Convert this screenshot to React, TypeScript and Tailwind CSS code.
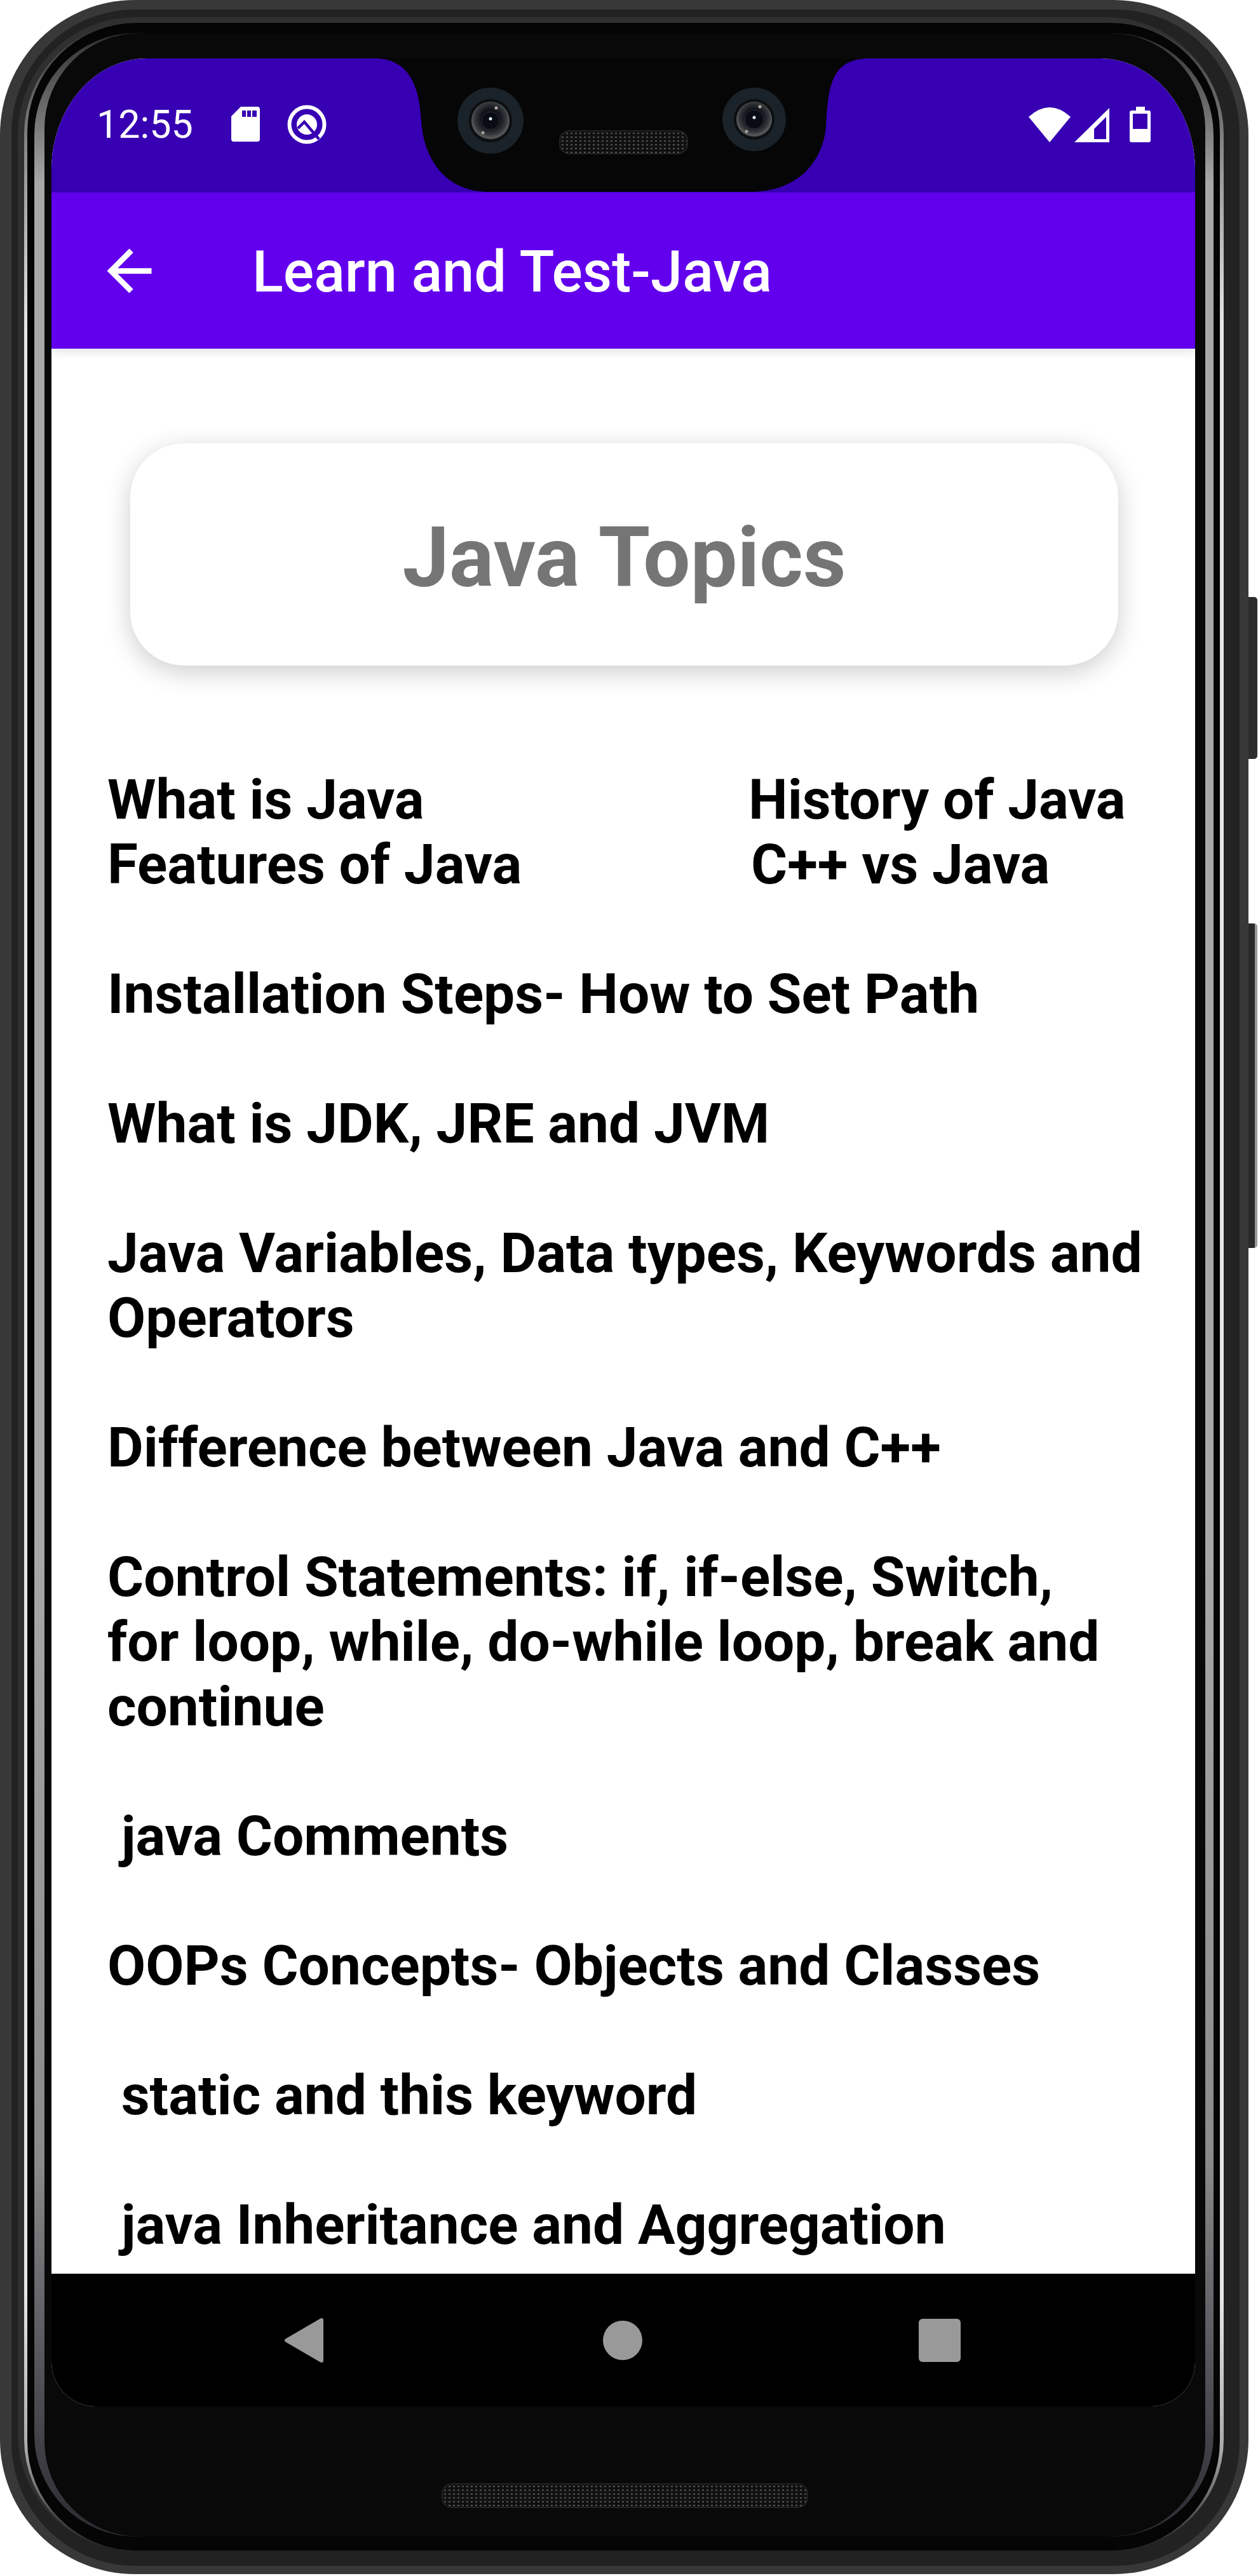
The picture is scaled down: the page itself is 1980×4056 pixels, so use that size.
import React from "react";

function Camera({ id, size, lens, iris }: { id: string; size: number; lens: number; iris: number }) {
  const c = size / 2;
  return (
    <svg width={size} height={size} viewBox={`0 0 ${size} ${size}`}>
      <defs>
        <radialGradient id={id} cx="50%" cy="45%" r="55%">
          <stop offset="0%" stopColor="#0a0d14" />
          <stop offset="45%" stopColor="#10131a" />
          <stop offset="75%" stopColor="#33363a" />
          <stop offset="92%" stopColor="#5a5c5e" />
          <stop offset="100%" stopColor="#181a1c" />
        </radialGradient>
      </defs>
      <circle cx={c} cy={c} r={c} fill="#1a2329" />
      <circle cx={c} cy={c} r={lens + 4} fill="#0c0e10" />
      <circle cx={c} cy={c} r={lens} fill={`url(#${id})`} />
      <circle cx={c} cy={c} r={iris} fill="#0a0c14" stroke="#2c3038" strokeWidth="1" />
      <circle cx={c} cy={c - 3} r="2.5" fill="#dfeeff" />
      <circle cx={c + 9} cy={c - 20} r="2.5" fill="#b8a8a0" />
      <circle cx={c - 12} cy={c + 19} r="2.5" fill="#a8a098" />
    </svg>
  );
}

function Speaker({ className }: { className: string }) {
  return (
    <div
      className={`rounded-[16px] border-2 border-[#222222] bg-[#111111] bg-[radial-gradient(circle,#5c5c5c_1px,transparent_1.6px)] bg-[length:7px_6px] ${className}`}
    />
  );
}

const topics = [
  "Installation Steps- How to Set Path",
  "What is JDK, JRE and JVM",
  "Java Variables, Data types, Keywords and\nOperators",
  "Difference between Java and C++",
  "Control Statements: if, if-else, Switch,\nfor loop, while, do-while loop, break and\ncontinue",
  " java Comments",
  "OOPs Concepts- Objects and Classes",
  " static and this keyword",
  " java Inheritance and Aggregation",
];

export default function App() {
  return (
    <div className="relative h-[4056px] w-[1980px] overflow-hidden bg-white font-[family-name:Roboto,sans-serif]">
      {/* side buttons */}
      <div className="absolute left-[1960px] top-[940px] h-[255px] w-[19px] rounded-r-[5px] bg-[#2c2c2c]" />
      <div className="absolute left-[1960px] top-[1454px] h-[511px] w-[19px] rounded-r-[5px] border-r-[4px] border-[#9a9a9a] bg-[#2a2a2a]" />

      {/* outer frame bands */}
      <div className="relative h-[4053px] w-[1965px] rounded-[212px] bg-[#383838] pb-[13px] pl-[18px] pr-[14px] pt-[15px]">
        <div className="h-full rounded-[195px] bg-[#222222] pb-[24px] pl-[10px] pr-[25px] pt-[12px]">
          <div className="h-full rounded-[185px] bg-[#303030] pl-[10px] pt-[9px]">
            {/* white line ring */}
            <div className="h-full rounded-[175px] bg-[linear-gradient(180deg,#333333_0%,#999999_6%,#e6e6e6_12%,#e6e6e6_90%,#aaaaaa_96%,#222222_100%)] pl-[5px] pr-[6px]">
              <div className="h-full rounded-[172px] bg-[#050505] pb-[22px] pl-[11px] pr-[10px] pt-[16px]">
                {/* gray ring */}
                <div className="h-full rounded-[160px] bg-[linear-gradient(180deg,#303030_0%,#a8a8a8_6%,#a8a8a8_60%,#8a8a8a_85%,#55555c_93%,#2a2a30_100%)] pl-[16px] pr-[13px]">
                  {/* bezel */}
                  <div className="flex h-full flex-col rounded-[150px] bg-[#090909] pl-[11px] pr-[16px] pt-[40px]">
                    {/* screen */}
                    <div className="relative flex h-[3697px] flex-col overflow-hidden rounded-b-[70px] rounded-tl-[150px_175px] rounded-tr-[150px_175px] bg-white">
                      {/* status bar */}
                      <div className="relative flex h-[211px] shrink-0 items-center justify-between bg-[#3700B3] pb-[4px] pl-[71px] pr-[70px] text-white">
                        <div className="flex items-center">
                          <span className="text-[61px] leading-[70px]">12:55</span>
                          <svg className="ml-[60px]" width="45" height="55" viewBox="0 0 45 55">
                            <path
                              fill="#fff"
                              fillRule="evenodd"
                              d="M15 0H41a4 4 0 0 1 4 4V51a4 4 0 0 1-4 4H4a4 4 0 0 1-4-4V15ZM17 6V16H23V6ZM25 6V16H31V6ZM33 6V16H40V6Z"
                            />
                          </svg>
                          <svg className="ml-[43px]" width="62" height="62" viewBox="0 0 62 62">
                            <circle cx="31" cy="31" r="27.5" fill="none" stroke="#fff" strokeWidth="6" />
                            <circle cx="31" cy="31" r="16" fill="#fff" />
                            <path d="M17 37 L27 27 L50 54" fill="none" stroke="#3700B3" strokeWidth="4.5" />
                          </svg>
                        </div>
                        <svg width="192" height="56" viewBox="1619 168 192 56">
                          <path fill="#fff" d="M1652 224L1619 184Q1652 154 1685 184Z" />
                          <path
                            fill="#fff"
                            fillRule="evenodd"
                            d="M1691 224L1746 170V224ZM1722 203L1741 184V219H1722Z"
                          />
                          <path
                            fill="#fff"
                            fillRule="evenodd"
                            d="M1788 168H1802V174H1808a3 3 0 0 1 3 3V221a3 3 0 0 1-3 3H1781a3 3 0 0 1-3-3V177a3 3 0 0 1 3-3H1788ZM1783 179V203H1806V179Z"
                          />
                        </svg>

                        {/* notch */}
                        <svg
                          className="absolute left-[419px] top-0"
                          width="1000"
                          height="211"
                          viewBox="500 92 1000 211"
                        >
                          <path
                            fill="#060606"
                            d="M590 92C640 92 660 130 663 191C667 250 700 302 770 302L1181 302C1260 302 1296 250 1300 199C1304 130 1310 92 1370 92Z"
                          />
                        </svg>
                        <div className="absolute left-[639px] top-[46px]">
                          <Camera id="camL" size={104} lens={30} iris={14} />
                        </div>
                        <div className="absolute left-[1056px] top-[46px]">
                          <Camera id="camR" size={100} lens={28} iris={15} />
                        </div>
                        <Speaker className="absolute left-[799px] top-[113px] h-[38px] w-[203px]" />
                      </div>

                      {/* app bar */}
                      <div className="relative z-10 flex h-[246px] shrink-0 items-center bg-[#6200EE] pl-[70px] text-white shadow-[0_6px_12px_rgba(0,0,0,0.1)]">
                        <svg width="105" height="105" viewBox="0 0 24 24" fill="#fff">
                          <path d="M20 11H7.83l5.59-5.59L12 4l-8 8 8 8 1.41-1.41L7.83 13H20v-2z" />
                        </svg>
                        <span className="ml-[141px] pt-[3px] text-[90.3px] font-medium leading-[106px]">
                          Learn and Test-Java
                        </span>
                      </div>

                      {/* content */}
                      <div className="flex min-h-0 flex-1 flex-col overflow-hidden bg-white pl-[88px] pr-[40px] pt-[149px]">
                        <div className="ml-[36px] flex h-[350px] w-[1555px] shrink-0 items-center justify-center rounded-[85px] bg-white pt-[10px] shadow-[0_10px_40px_rgba(0,0,0,0.2)]">
                          <span className="text-[131.6px] font-bold leading-[155px] text-[#757575]">Java Topics</span>
                        </div>
                        <div className="mt-[160px] flex flex-col gap-[102px] text-[87.4px] font-bold leading-[102px] text-black">
                          <div className="grid grid-cols-[1011px_1fr]">
                            <span>What is Java</span>
                            <span className="-ml-[2px]">History of Java</span>
                            <span>Features of Java</span>
                            <span className="ml-[2px]">C++ vs Java</span>
                          </div>
                          {topics.map((t) => (
                            <p key={t} className="whitespace-pre-wrap">
                              {t}
                            </p>
                          ))}
                        </div>
                      </div>

                      {/* nav bar */}
                      <div className="flex h-[209px] shrink-0 items-center justify-between bg-black pl-[367px] pr-[369px]">
                        <svg width="61" height="70" viewBox="0 0 61 70">
                          <path
                            fill="#999999"
                            stroke="#999999"
                            strokeWidth="6"
                            strokeLinejoin="round"
                            d="M3 35L58 3V67Z"
                          />
                        </svg>
                        <div className="ml-[4px] h-[62px] w-[62px] rounded-full bg-[#999999]" />
                        <div className="h-[68px] w-[66px] rounded-[6px] bg-[#999999]" />
                      </div>
                    </div>
                    {/* bottom speaker */}
                    <Speaker className="ml-[5px] mt-[121px] h-[39px] w-[577px] self-center" />
                  </div>
                </div>
              </div>
            </div>
          </div>
        </div>
      </div>
    </div>
  );
}
